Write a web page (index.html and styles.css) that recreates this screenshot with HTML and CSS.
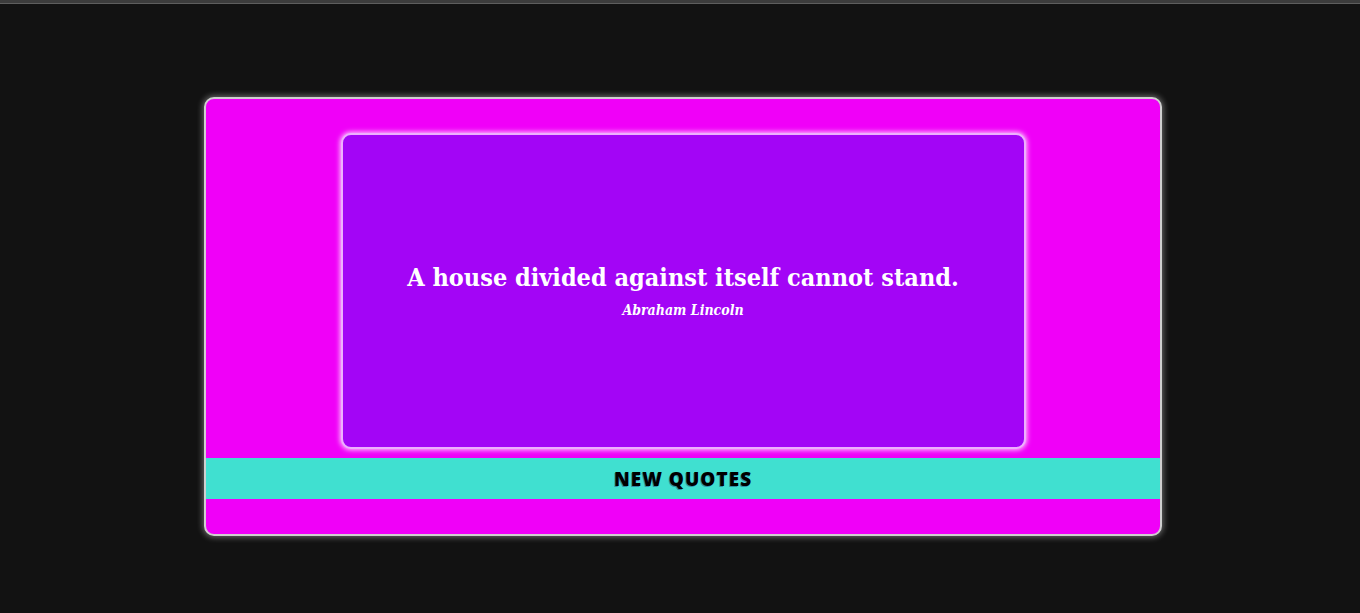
FILE: index.html
```html
<!DOCTYPE html>
<html>
<head>
<meta charset="utf-8">
<link rel="stylesheet" href="styles.css">
</head>
<body>
<div class="topbar"></div>
<main class="stage">
  <section class="card">
    <div class="quote-box">
      <h1 class="quote">A house divided against itself cannot stand.</h1>
      <p class="author">Abraham Lincoln</p>
    </div>
    <button class="new-btn">NEW QUOTES</button>
  </section>
</main>
</body>
</html>
```
FILE: styles.css
```css
html, body {
  margin: 0;
  padding: 0;
  background: #121212;
  height: 100%;
}
.topbar {
  height: 3px;
  background: #3c3c3c;
  border-bottom: 1px solid #5e5e5e;
}
.stage {
  display: flex;
  justify-content: center;
  padding: 93px 0 0 6px;
}
.card {
  box-sizing: border-box;
  width: 958px;
  height: 439px;
  background: #f000f8;
  border: 2px solid #cfcfcf;
  border-radius: 10px;
  box-shadow: 0 0 6px 1px rgba(255,255,255,0.4);
  display: flex;
  flex-direction: column;
  align-items: center;
  padding-top: 34px;
}
.quote-box {
  box-sizing: border-box;
  width: 685px;
  height: 316px;
  background: #a305f6;
  border: 2px solid rgba(255,220,255,0.8);
  border-radius: 10px;
  box-shadow: 0 0 5px 1px rgba(255,255,255,0.8);
  display: flex;
  flex-direction: column;
  align-items: center;
  justify-content: center;
  color: #fff;
  font-family: "DejaVu Serif Condensed", "DejaVu Serif", serif;
}
.quote {
  margin: 0;
  font-size: 25px;
  font-weight: bold;
  line-height: 30px;
}
.author {
  margin: 8px 0 0;
  font-size: 14px;
  font-style: italic;
  font-weight: bold;
  line-height: 18px;
}
.new-btn {
  margin-top: 9px;
  width: 100%;
  height: 41px;
  border: none;
  background: #40e0d0;
  color: #000;
  font-family: "Open Sans", "DejaVu Sans", sans-serif;
  font-weight: 800;
  font-size: 19px;
  letter-spacing: 1px;
  text-shadow: -1px 1px 0 rgba(30,40,120,0.45);
  padding: 0;
}
```
